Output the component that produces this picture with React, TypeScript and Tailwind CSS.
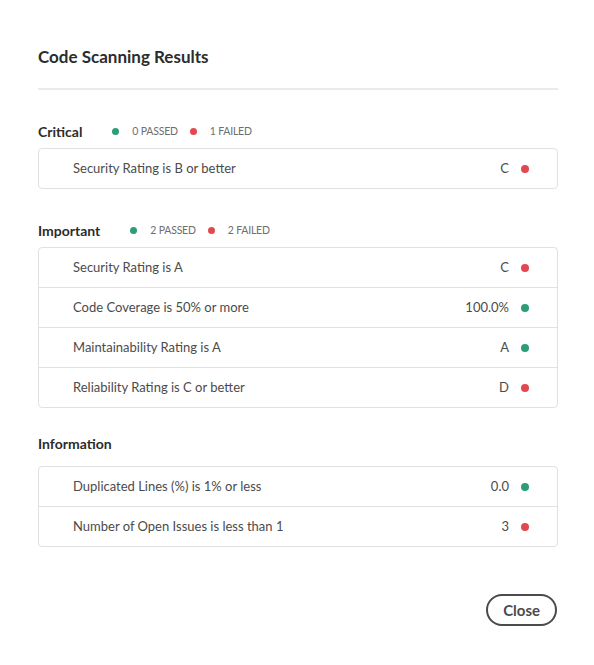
const sections = [
  {
    title: 'Critical',
    passed: 0,
    failed: 1,
    rows: [{ label: 'Security Rating is B or better', value: 'C', ok: false }],
  },
  {
    title: 'Important',
    passed: 2,
    failed: 2,
    rows: [
      { label: 'Security Rating is A', value: 'C', ok: false },
      { label: 'Code Coverage is 50% or more', value: '100.0%', ok: true },
      { label: 'Maintainability Rating is A', value: 'A', ok: true },
      { label: 'Reliability Rating is C or better', value: 'D', ok: false },
    ],
  },
  {
    title: 'Information',
    rows: [
      { label: 'Duplicated Lines (%) is 1% or less', value: '0.0', ok: true },
      { label: 'Number of Open Issues is less than 1', value: '3', ok: false },
    ],
  },
]

const Dot = ({ ok, size = 'row' }: { ok: boolean; size?: 'row' | 'pill' }) => (
  <span
    className={`inline-block rounded-full ${size === 'row' ? 'w-2 h-2' : 'w-[7px] h-[7px]'} ${
      ok ? 'bg-[#2d9d78]' : 'bg-[#e34850]'
    }`}
  />
)

export default function App() {
  return (
    <div
      className="w-[594px] h-[665px] bg-white pl-[38px] pr-[36px] pt-[45px] text-[#4b4b4b]"
      style={{ fontFamily: 'Lato, "Open Sans", sans-serif' }}
    >
      <h2 className="text-[17px] leading-6 font-bold text-[#2c2c2c]">Code Scanning Results</h2>
      <div className="mt-[19px] h-[2px] bg-[#eaeaea]" />

      {sections.map((s, i) => (
        <div key={s.title} className={i === 2 ? 'mt-[25px]' : 'mt-[31px]'}>
          <div className={`flex items-center h-5 ${s.passed === undefined ? 'mb-[13px]' : 'mb-[7px]'}`}>
            <span className="text-[14px] font-bold text-[#2c2c2c]">{s.title}</span>
            {s.passed !== undefined && (
              <div className="ml-[30px] flex items-center text-[10.5px] tracking-[-0.02em] text-[#6e6e6e] uppercase">
                <Dot ok size="pill" />
                <span className="ml-[13px] mr-[12px] pt-px">{s.passed} Passed</span>
                <Dot ok={false} size="pill" />
                <span className="ml-[13px] pt-px">{s.failed} Failed</span>
              </div>
            )}
          </div>
          <div className="border border-[#e1e1e1] rounded-[4px]">
            {s.rows.map((r, j) => (
              <div
                key={r.label}
                className={`flex items-center pl-[34px] pr-[28px] text-[13px] ${
                  j > 0 ? 'h-[40px] border-t border-[#e1e1e1]' : 'h-[39px]'
                }`}
              >
                <span className="flex-1">{r.label}</span>
                <span>{r.value}</span>
                <span className="ml-[12px] flex">
                  <Dot ok={r.ok} />
                </span>
              </div>
            ))}
          </div>
        </div>
      ))}

      <div className="flex justify-end mt-[47px]">
        <button className="h-8 px-[15px] mr-px rounded-full border-2 border-[#4b4b4b] text-[15px] font-bold text-[#4b4b4b] leading-none">
          Close
        </button>
      </div>
    </div>
  )
}
